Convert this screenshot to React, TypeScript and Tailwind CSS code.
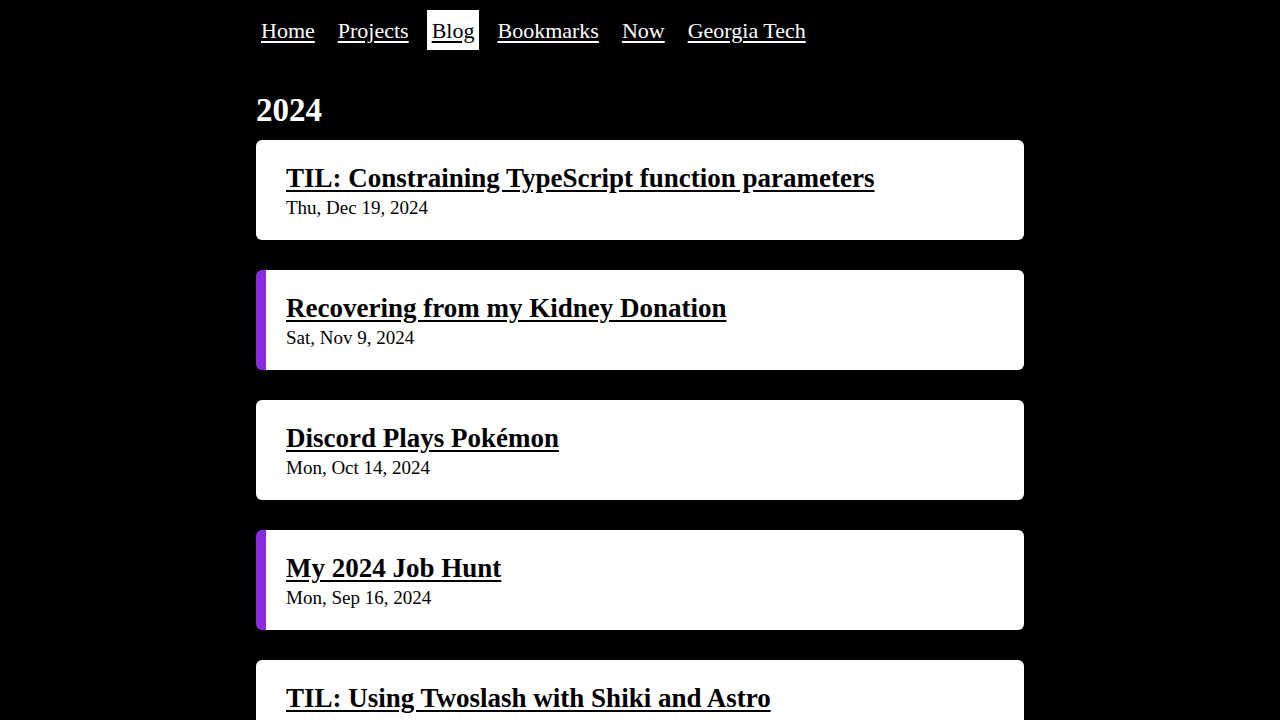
const posts = [
  { title: 'TIL: Constraining TypeScript function parameters', date: 'Thu, Dec 19, 2024', featured: false },
  { title: 'Recovering from my Kidney Donation', date: 'Sat, Nov 9, 2024', featured: true },
  { title: 'Discord Plays Pokémon', date: 'Mon, Oct 14, 2024', featured: false },
  { title: 'My 2024 Job Hunt', date: 'Mon, Sep 16, 2024', featured: true },
  { title: 'TIL: Using Twoslash with Shiki and Astro', date: 'Sun, Aug 25, 2024', featured: false },
];

const links = ['Home', 'Projects', 'Blog', 'Bookmarks', 'Now', 'Georgia Tech'];

export default function App() {
  return (
    <div className="min-h-screen bg-black text-white font-['Liberation_Serif',serif]">
      <div className="mx-auto w-[768px]">
        <nav className="flex gap-[13px] pt-[10px]">
          {links.map((l) => (
            <a
              key={l}
              href="#"
              className={
                'flex h-10 items-center px-[5px] text-[22px] underline underline-offset-[3px] ' +
                (l === 'Blog' ? 'bg-white text-black' : 'text-white')
              }
            >
              {l}
            </a>
          ))}
        </nav>

        <h2 className="mt-[40px] mb-[10px] text-[33px] font-bold leading-[40px]">2024</h2>

        <div className="flex flex-col gap-[30px]">
          {posts.map((p) => (
            <div
              key={p.title}
              className={
                'h-[100px] rounded-md bg-white pt-[21px] text-black ' +
                (p.featured ? 'border-l-[10px] border-[#8a2be2] pl-[20px]' : 'pl-[30px]')
              }
            >
              <a href="#" className="block text-[27px] font-bold leading-[34px] underline underline-offset-[3px]">
                {p.title}
              </a>
              <p className="text-[19px] leading-[26px]">{p.date}</p>
            </div>
          ))}
        </div>
      </div>
    </div>
  );
}
